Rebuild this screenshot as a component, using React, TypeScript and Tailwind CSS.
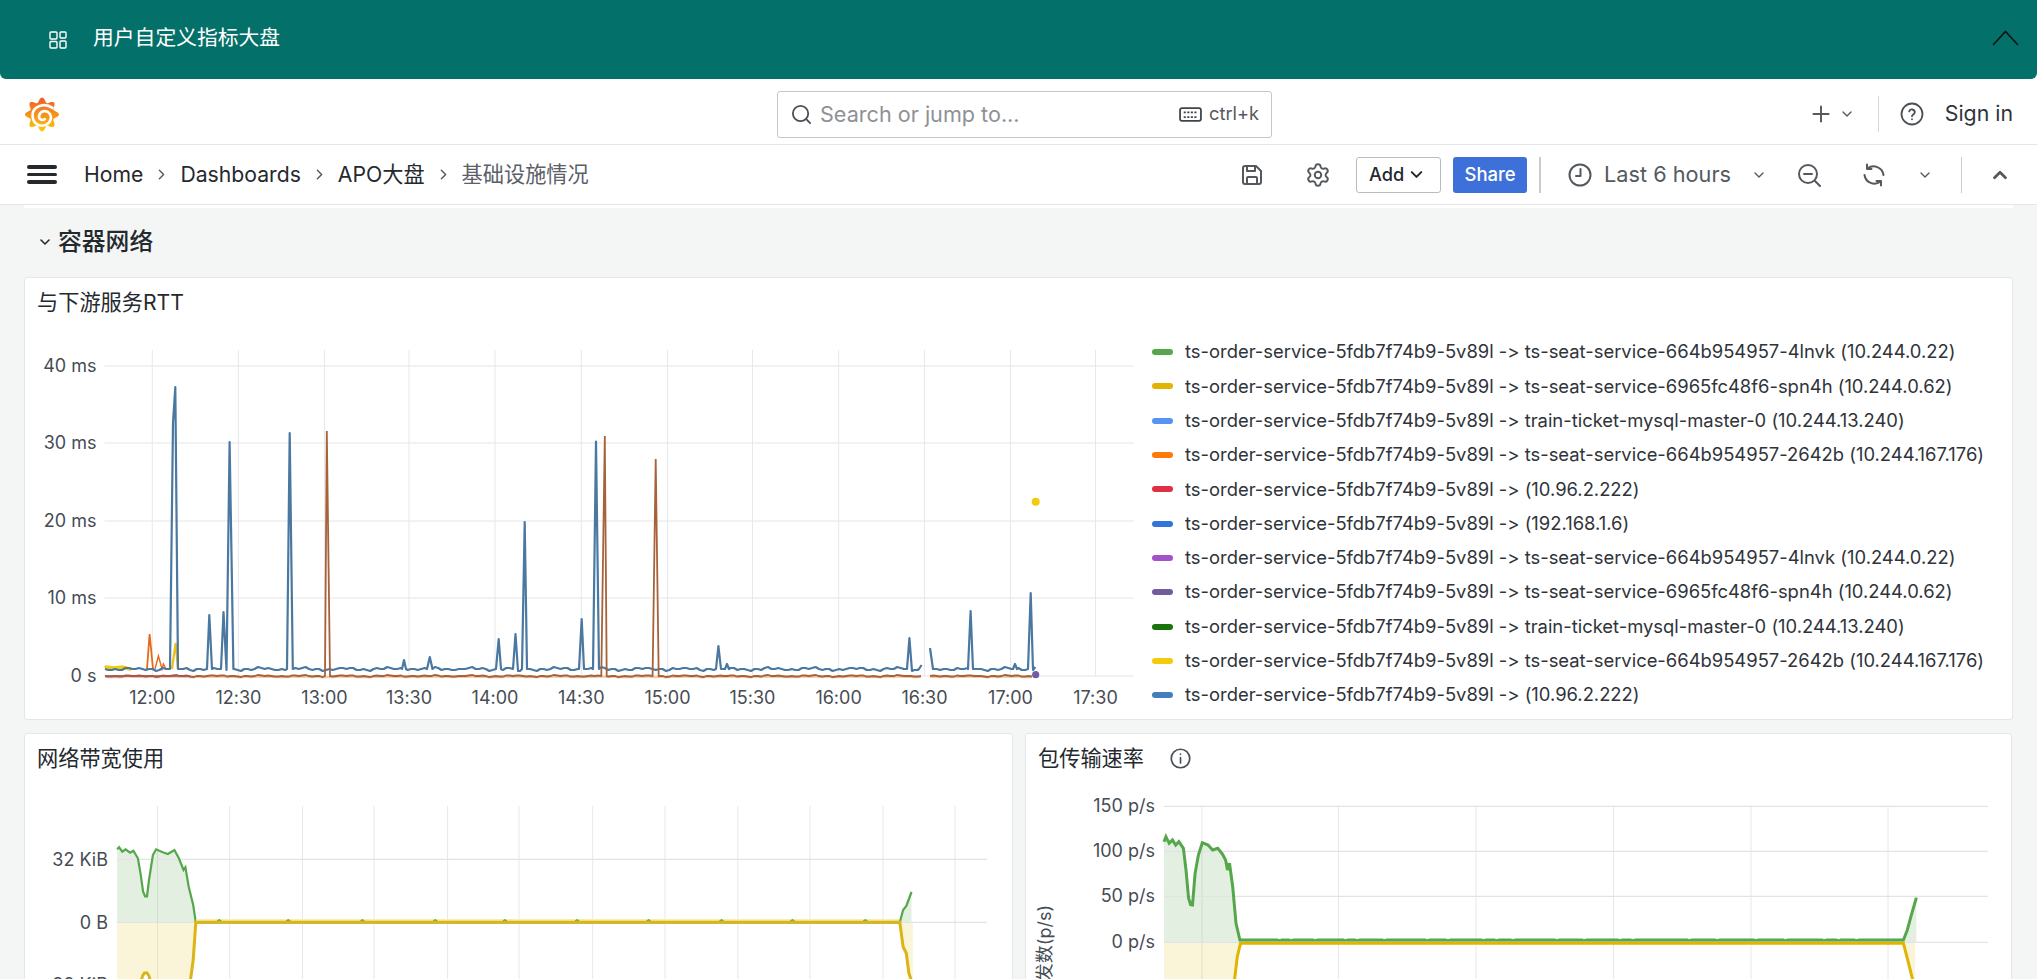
import React from "react";
import { ChevronDown, ChevronRight, ChevronUp, Plus, Search, Settings } from "lucide-react";

type Pt = [number, number];
const path = (pts: Pt[]) => pts.map((p, i) => `${i ? "L" : "M"}${p[0].toFixed(1)} ${p[1].toFixed(1)}`).join(" ");

const legend: [string, string][] = [
  ["#56a64b", "ts-order-service-5fdb7f74b9-5v89l -> ts-seat-service-664b954957-4lnvk (10.244.0.22)"],
  ["#e0b400", "ts-order-service-5fdb7f74b9-5v89l -> ts-seat-service-6965fc48f6-spn4h (10.244.0.62)"],
  ["#5794f2", "ts-order-service-5fdb7f74b9-5v89l -> train-ticket-mysql-master-0 (10.244.13.240)"],
  ["#ff780a", "ts-order-service-5fdb7f74b9-5v89l -> ts-seat-service-664b954957-2642b (10.244.167.176)"],
  ["#e02f44", "ts-order-service-5fdb7f74b9-5v89l -> (10.96.2.222)"],
  ["#3274d9", "ts-order-service-5fdb7f74b9-5v89l -> (192.168.1.6)"],
  ["#a352cc", "ts-order-service-5fdb7f74b9-5v89l -> ts-seat-service-664b954957-4lnvk (10.244.0.22)"],
  ["#705da0", "ts-order-service-5fdb7f74b9-5v89l -> ts-seat-service-6965fc48f6-spn4h (10.244.0.62)"],
  ["#19730e", "ts-order-service-5fdb7f74b9-5v89l -> train-ticket-mysql-master-0 (10.244.13.240)"],
  ["#f2cc0c", "ts-order-service-5fdb7f74b9-5v89l -> ts-seat-service-664b954957-2642b (10.244.167.176)"],
  ["#447ebc", "ts-order-service-5fdb7f74b9-5v89l -> (10.96.2.222)"],
];

const noise = (x: number) => Math.round((Math.sin(x * 1.7) + Math.sin(x * 0.53)) * 0.9);

function series(from: number, to: number, base: number, amp: number, spikes: Pt[][]): Pt[] {
  const pts: Pt[] = [];
  for (let x = from; x <= to; x += 3.4) {
    if (spikes.some((s) => x >= s[0][0] - 0.5 && x <= s[s.length - 1][0] + 0.5)) continue;
    pts.push([x, base + noise(x) * amp]);
  }
  spikes.forEach((s) => pts.push(...s));
  return pts.sort((a, b) => a[0] - b[0]);
}

const B = 669;
const blue1 = series(105, 921.5, B, 1, [
  [[170, B], [173, 423], [175.3, 387], [178, B]],
  [[207, B], [209.3, 615], [212, B]],
  [[221, B], [223.5, 612], [226.5, 670], [229.6, 442], [233.4, B]],
  [[287, B], [289.7, 433], [292.8, B]],
  [[402, B], [404, 660], [406, B]],
  [[427, B], [429.8, 657], [432.5, B]],
  [[496, B], [498.7, 639], [501, B]],
  [[513, B], [515.5, 634], [518, 671], [520, 671], [522, B], [524.7, 522], [527, B]],
  [[579, B], [581.7, 619], [584, B]],
  [[593, B], [596, 441.7], [599, B]],
  [[716, B], [718.4, 646], [721, B]],
  [[725, B], [727, 664], [729, B]],
  [[907, B], [909.4, 638], [912, 671]],
  [[919, 669], [921.6, 665]],
]);
const blue2 = series(930, 1035, B, 1, [
  [[930, 648], [933, B]],
  [[968, B], [970.6, 611], [973, B]],
  [[1013, B], [1015, 664], [1017, B]],
  [[1028, B], [1030.7, 593], [1033, 670], [1035.3, 667]],
]);
const brown1 = series(105, 921.5, 676, 0.5, [
  [[325, 676], [326.8, 431], [330, 676]],
  [[601.3, 676], [604.8, 436], [606.7, 676]],
  [[652.6, 676], [655.7, 459], [658.7, 676]],
]);
const brown2 = series(930, 1033, 676, 0.5, []);

const hLines1 = [366, 443, 521, 598, 676];
const hLabels1 = ["40 ms", "30 ms", "20 ms", "10 ms", "0 s"];
const vLines1 = [152.3, 238.4, 324.5, 409, 495, 581.3, 667.5, 752.5, 838.6, 924.5, 1010.5, 1095.5];
const vLabels1 = ["12:00", "12:30", "13:00", "13:30", "14:00", "14:30", "15:00", "15:30", "16:00", "16:30", "17:00", "17:30"];

const txt = { fill: "#464c54", fontSize: 18 };

function RttChart() {
  return (
    <svg className="w-[1112px] h-[385px] shrink-0" viewBox="25 335 1112 385">
      {hLines1.map((y) => <line key={y} x1={104.5} x2={1134} y1={y} y2={y} stroke="#e5e6e7" strokeWidth={1.2} />)}
      {vLines1.map((x) => <line key={x} x1={x} x2={x} y1={350} y2={676} stroke="#e7e8e9" />)}
      {hLabels1.map((t, i) => <text key={t} x={96.5} y={hLines1[i] + 5.5} textAnchor="end" {...txt}>{t}</text>)}
      {vLabels1.map((t, i) => <text key={t} x={vLines1[i]} y={704} textAnchor="middle" {...txt}>{t}</text>)}
      <path d={path(series(105, 921.5, 677, 0.3, []))} stroke="#f0c8a8" strokeWidth={2} fill="none" />
      <path d={path(series(930, 1033, 677, 0.3, []))} stroke="#f0c8a8" strokeWidth={2} fill="none" />
      <path d="M106 667 L114 668 L122 667 L130 669" stroke="#f2cc0c" strokeWidth={3.5} fill="none" strokeLinecap="round" />
      <path d="M147 669 L149.6 634 L153 669" stroke="#e8681a" strokeWidth={1.8} fill="none" />
      <path d="M172 669 L175.6 643 L178 669" stroke="#e8c21a" strokeWidth={2.2} fill="none" />
      <path d="M155 669 L158.4 656 L162 669 L163.4 664 L166 669" stroke="#e8681a" strokeWidth={1.4} fill="none" />
      <path d={path(blue1)} stroke="#4a78a0" strokeWidth={2.2} fill="none" strokeLinejoin="round" />
      <path d={path(blue2)} stroke="#4a78a0" strokeWidth={2.2} fill="none" strokeLinejoin="round" />
      <path d={path(brown1)} stroke="#a8623a" strokeWidth={1.8} fill="none" />
      <path d={path(brown2)} stroke="#a8623a" strokeWidth={1.8} fill="none" />
      <path d="M105 676 L190 676" stroke="#a8505a" strokeWidth={1.6} fill="none" />
      <circle cx={1035.7} cy={501.7} r={4} fill="#f2cc0c" />
      <circle cx={1035.7} cy={674.7} r={3.6} fill="#705da0" />
    </svg>
  );
}

const z2 = (pts: Pt[]): Pt[] => pts.map(([x, y]) => [x / 1.537, 730 + y / 3]);
const z3 = (pts: Pt[]): Pt[] => pts.map(([x, y]) => [1020 + x / 1.5418, 730 + y / 3]);

const g2 = z2([[180, 358], [183, 352], [188, 365], [193, 358], [200, 368], [205, 362], [212, 385], [216, 430], [220, 485], [223, 499], [226, 499], [229, 450], [235, 375], [240, 358], [250, 367], [258, 372], [268, 360], [275, 385], [282, 420], [285, 412], [290, 470], [297, 525], [301, 577], [1383, 577], [1388, 540], [1393, 528], [1401, 486]]);
const y2 = z2([[180, 850], [212, 850], [216, 762], [219, 738], [222, 729], [226, 729], [229, 738], [232, 762], [236, 850], [288, 850], [293, 747], [297, 690], [301, 577], [1383, 577], [1388, 650], [1393, 670], [1397, 730], [1400, 747], [1403, 850]]);
const g3 = z3([[222, 335], [225, 320], [230, 340], [235, 330], [240, 345], [245, 335], [252, 355], [256, 420], [260, 505], [263, 524], [266, 525], [270, 430], [275, 375], [281, 338], [290, 345], [297, 360], [305, 355], [312, 372], [317, 390], [320, 420], [323, 400], [328, 470], [333, 580], [339, 630], [1362, 630], [1368, 600], [1375, 550], [1382, 503]]);
const y3 = z3([[222, 850], [328, 850], [331, 745], [335, 680], [340, 640], [1362, 640], [1370, 700], [1376, 747], [1380, 850]]);

const bumps2 = [337, 443, 557, 669, 776, 887, 997, 1109, 1218, 1330];
const flecks3 = [400, 418, 455, 502, 520, 562, 628, 660, 715, 735, 760, 828, 870, 925, 945, 1032, 1075, 1135, 1180, 1240, 1262, 1290];

function area(pts: Pt[], zero: number) {
  return `${path(pts)} L${pts[pts.length - 1][0].toFixed(1)} ${zero} L${pts[0][0].toFixed(1)} ${zero} Z`;
}

function BandwidthChart() {
  const xs = [157.5, 229.7, 302.5, 374, 447.6, 519, 592.7, 665, 737.8, 810, 883, 955];
  return (
    <svg className="w-[987px] h-[270px] block" viewBox="25 791 987 270">
      {xs.map((x) => <line key={x} x1={x} x2={x} y1={806} y2={1060} stroke="#e7e8e9" />)}
      <path d={area(g2, 922.3)} fill="#56a64b" fillOpacity={0.17} />
      <path d={area(y2, 922.3)} fill="#e0b400" fillOpacity={0.15} />
      {[859.3, 922.3, 985.3].map((y) => <line key={y} x1={117} x2={987} y1={y} y2={y} stroke="#e2e3e4" strokeWidth={1.2} />)}
      <text x={108} y={865.5} textAnchor="end" {...txt}>32 KiB</text>
      <text x={108} y={928.5} textAnchor="end" {...txt}>0 B</text>
      <text x={108} y={991} textAnchor="end" {...txt}>-32 KiB</text>
      <path d={path(g2)} stroke="#56a64b" strokeWidth={2.2} fill="none" />
      <path d="M196 920 H899" stroke="#f6edb0" strokeWidth={2} fill="none" />
      {bumps2.map((x) => <path key={x} d={`M${x / 1.537 - 2} 921 L${x / 1.537} 919.8 L${x / 1.537 + 2} 921`} stroke="#56a64b" strokeWidth={1.4} fill="none" />)}
      <path d={path(y2)} stroke="#dcb413" strokeWidth={3} fill="none" />
    </svg>
  );
}

function PacketChart() {
  const xs = [1202, 1338.5, 1476, 1613.5, 1751, 1888];
  const ys: [number, string][] = [[806.3, "150 p/s"], [851.3, "100 p/s"], [896.3, "50 p/s"], [942.3, "0 p/s"], [988, "-50 p/s"]];
  return (
    <svg className="w-[985px] h-[270px] block" viewBox="1026 791 985 270">
      {xs.map((x) => <line key={x} x1={x} x2={x} y1={806} y2={1060} stroke="#e7e8e9" />)}
      <path d={area(g3, 942.3)} fill="#56a64b" fillOpacity={0.17} />
      <path d={area(y3, 942.3)} fill="#e0b400" fillOpacity={0.15} />
      {ys.map(([y]) => <line key={y} x1={1164} x2={1987.7} y1={y} y2={y} stroke="#e2e3e4" strokeWidth={1.2} />)}
      {ys.map(([y, t]) => <text key={t} x={1155} y={y + 5.5} textAnchor="end" {...txt}>{t}</text>)}
      <text transform="translate(1051 905) rotate(-90)" textAnchor="end" {...txt}>收发数(p/s)</text>
      <path d={path(y3)} stroke="#e0b400" strokeWidth={3} fill="none" />
      <path d={path(g3)} stroke="#56a64b" strokeWidth={3} fill="none" />
      {flecks3.map((x) => <path key={x} d={`M${1020 + x / 1.5418 - 1.5} 938.6 h3`} stroke="#ffffff" strokeWidth={1} fill="none" />)}
    </svg>
  );
}

const logoPts = (() => {
  const out: string[] = [];
  for (let i = 0; i < 96; i++) {
    const a = (i / 96) * Math.PI * 2 - Math.PI / 2;
    const r = 15.5 + 2.5 * Math.cos(a * 8 + Math.PI / 2 * 8);
    out.push(`${(18 + r * Math.cos(a)).toFixed(1)},${(19 + r * Math.sin(a)).toFixed(1)}`);
  }
  return out.join(" ");
})();

function Logo() {
  return (
    <svg width="34" height="37" viewBox="0 0 36 38">
      <defs>
        <linearGradient id="lg" x1="0" y1="0" x2="0" y2="1">
          <stop offset="0" stopColor="#f05a28" />
          <stop offset="1" stopColor="#fbca0a" />
        </linearGradient>
      </defs>
      <polygon points={logoPts} fill="url(#lg)" />
      <path d="M29 12C21 6 8 10 8 20C8 28 15 33 22 30C27 28 29 22 26 18C23 14 16 15 15 20C14 24 18 26 21 24" fill="none" stroke="#fff" strokeWidth="2.8" strokeLinecap="round" />
    </svg>
  );
}

function Divider({ cls }: { cls: string }) {
  return <div className={cls} />;
}

const ic = { fill: "none", stroke: "#55595e", strokeWidth: 2, strokeLinecap: "round" as const, strokeLinejoin: "round" as const };

export default function App() {
  return (
    <div className="h-screen w-full overflow-hidden bg-white font-[Inter,'Noto_Sans_CJK_SC',sans-serif] [font-variant-ligatures:none] text-[#24292e]">
      <div className="h-[79px] bg-[#04706a] rounded-b-[6px] flex items-center text-white">
        <svg className="ml-[49px] shrink-0" width="18" height="18" viewBox="0 0 18 18" fill="none" stroke="#fff" strokeWidth="1.4">
          <rect x="1" y="1" width="7" height="7" rx="1" />
          <rect x="11" y="1" width="6" height="6" rx="1" />
          <rect x="1" y="10.5" width="7" height="6.5" rx="1" />
          <rect x="11" y="10" width="6" height="7" rx="1" />
        </svg>
        <div className="ml-[26px] pb-[2px] text-[20.8px] leading-none">用户自定义指标大盘</div>
        <svg className="ml-auto mr-[18px] mb-[3px]" width="27" height="16" viewBox="0 0 27 16" fill="none" stroke="#111" strokeWidth="1.6">
          <path d="M1 15 L13.5 1.5 L26 15" />
        </svg>
      </div>

      <div className="h-[66px] pt-[5px] border-b border-[#e4e6e8] flex items-center">
        <div className="ml-[25px] w-[34px] shrink-0 flex"><Logo /></div>
        <div className="ml-[718px] w-[495px] h-[47px] border border-[#c4c6c9] rounded-[3px] flex items-center">
          <Search className="ml-[12px] text-[#4b5057]" size={23} strokeWidth={1.9} />
          <span className="ml-[7px] text-[21.6px] text-[#8e9196]">Search or jump to...</span>
          <svg className="ml-auto" width="23" height="15" viewBox="0 0 22 14" fill="none" stroke="#3f444a" strokeWidth="1.7">
            <rect x="1" y="1" width="20" height="12" rx="2" />
            <path d="M4.5 5h13M4.5 9.5h13" strokeDasharray="2 1.4" />
          </svg>
          <span className="ml-[7px] mr-[12px] text-[18.2px] text-[#55595e]">ctrl+k</span>
        </div>
        <div className="ml-auto flex items-center">
          <Plus size={26} strokeWidth={1.8} className="text-[#55595e]" />
          <ChevronDown size={16} strokeWidth={2} className="ml-[5px] text-[#55595e]" />
          <Divider cls="ml-[23px] w-px h-[36px] bg-[#d4d6d8]" />
          <svg className="ml-[21px]" width="24" height="24" viewBox="0 0 24 24" fill="none" stroke="#4b5057" strokeWidth="1.8" strokeLinecap="round">
            <circle cx="12" cy="12" r="10.5" />
            <path d="M9.2 9.3a2.9 2.9 0 0 1 5.6 1c0 1.9-2.8 2.4-2.8 3.9" />
            <path d="M12 17.2v.1" />
          </svg>
          <span className="ml-[21px] mr-[24px] text-[21.3px] text-[#2f343a]">Sign in</span>
        </div>
      </div>

      <div className="h-[60px] border-b border-[#e4e6e8] flex items-center">
        <div className="ml-[27px] w-[30px] flex flex-col gap-[4px]">
          <div className="h-[3.5px] bg-[#24292e] rounded-full" />
          <div className="h-[3.5px] bg-[#24292e] rounded-full" />
          <div className="h-[3.5px] bg-[#24292e] rounded-full" />
        </div>
        <div className="ml-[27px] flex items-center text-[21.2px]">
          <span>Home</span>
          <span className="w-[37px] flex justify-center"><ChevronRight size={17} strokeWidth={2} className="text-[#55595e]" /></span>
          <span>Dashboards</span>
          <span className="w-[37px] flex justify-center"><ChevronRight size={17} strokeWidth={2} className="text-[#55595e]" /></span>
          <span>APO大盘</span>
          <span className="w-[37px] flex justify-center"><ChevronRight size={17} strokeWidth={2} className="text-[#55595e]" /></span>
          <span className="text-[#5b6066]">基础设施情况</span>
        </div>
        <div className="ml-auto mr-[26px] flex items-center">
          <svg width="24" height="24" viewBox="0 0 24 24" {...ic}>
            <path d="M5 3h11l5 5v11a2 2 0 0 1-2 2H5a2 2 0 0 1-2-2V5a2 2 0 0 1 2-2z" />
            <path d="M7 3v5h8V3M7 21v-6a1 1 0 0 1 1-1h8a1 1 0 0 1 1 1v6" />
          </svg>
          <Settings className="ml-[40.5px] text-[#55595e]" size={26} strokeWidth={1.8} />
          <button className="ml-[25.5px] w-[85px] h-[36px] border border-[#b9bcbf] rounded-[3px] flex items-center justify-center gap-[3px] text-[18.2px] font-medium bg-white pr-[2px]">
            Add<ChevronDown size={19} strokeWidth={2.6} />
          </button>
          <button className="ml-[12px] w-[74px] h-[36px] rounded-[3px] bg-[#3d71d9] text-white text-[18.5px] font-medium">Share</button>
          <Divider cls="ml-[12px] w-[2px] h-[36px] bg-[#c9cbcd]" />
          <svg className="ml-[27px]" width="24" height="24" viewBox="0 0 24 24" {...ic}>
            <circle cx="12" cy="12" r="10.5" />
            <path d="M12.5 6v7H8" />
          </svg>
          <span className="ml-[12px] text-[21.7px] text-[#55595e]">Last 6 hours</span>
          <ChevronDown size={16} strokeWidth={2} className="ml-[20px] text-[#55595e]" />
          <svg className="ml-[30px]" width="24" height="24" viewBox="0 0 24 24" {...ic}>
            <circle cx="11" cy="11" r="9" />
            <path d="M7 11h8M18 18l5 5" />
          </svg>
          <svg className="ml-[41px]" width="24" height="24" viewBox="0 0 24 24" {...ic}>
            <path d="M5.5 5.5A10 10 0 0 1 21.5 12" />
            <path d="M18.5 18.5A10 10 0 0 1 2.5 12" />
            <path d="M5 1.5v4.5h4.5M19 22.5V18h-4.5" />
          </svg>
          <ChevronDown size={16} strokeWidth={2} className="ml-[31px] text-[#55595e]" />
          <Divider cls="ml-[28px] w-px h-[36px] bg-[#c9cbcd]" />
          <ChevronUp size={22} strokeWidth={3} className="ml-[27px] text-[#55595e]" />
        </div>
      </div>

      <div className="bg-[#f4f5f5] px-[24px]">
        <div className="h-[3px] bg-white" />
        <div className="h-[69px] pb-[1px] flex items-center">
          <ChevronDown size={16} strokeWidth={2.4} className="ml-[13px]" />
          <span className="ml-[5px] text-[23.8px] font-medium">容器网络</span>
        </div>
        <div className="h-[443px] bg-white border border-[#e4e6e8] rounded-[3px]">
          <div className="h-[57px] pl-[12px] pb-[8px] flex items-center text-[21.2px]">与下游服务RTT</div>
          <div className="flex">
            <RttChart />
            <div className="pl-[15px] text-[18.4px] whitespace-nowrap text-[#2f343a]">
              {legend.map(([c, t], i) => (
                <div key={i} className="h-[34.3px] flex items-center">
                  <div className="w-[21px] h-[6px] rounded-full" style={{ backgroundColor: c }} />
                  <span className="ml-[12px]">{t}</span>
                </div>
              ))}
            </div>
          </div>
        </div>
        <div className="mt-[13px] flex gap-[12px]">
          <div className="w-[989px] h-[400px] bg-white border border-[#e4e6e8] rounded-[3px]">
            <div className="h-[57px] pl-[12px] pb-[8px] flex items-center text-[21.2px]">网络带宽使用</div>
            <BandwidthChart />
          </div>
          <div className="w-[987px] h-[400px] bg-white border border-[#e4e6e8] rounded-[3px]">
            <div className="h-[57px] pl-[12px] pb-[8px] flex items-center text-[21.2px]">
              包传输速率
              <svg className="ml-[26px]" width="21" height="21" viewBox="0 0 20 20" fill="none" stroke="#4b5057" strokeWidth="1.6" strokeLinecap="round">
                <circle cx="10" cy="10" r="8.8" />
                <path d="M10 9.2v5M10 5.8v.1" />
              </svg>
            </div>
            <PacketChart />
          </div>
        </div>
      </div>
    </div>
  );
}
